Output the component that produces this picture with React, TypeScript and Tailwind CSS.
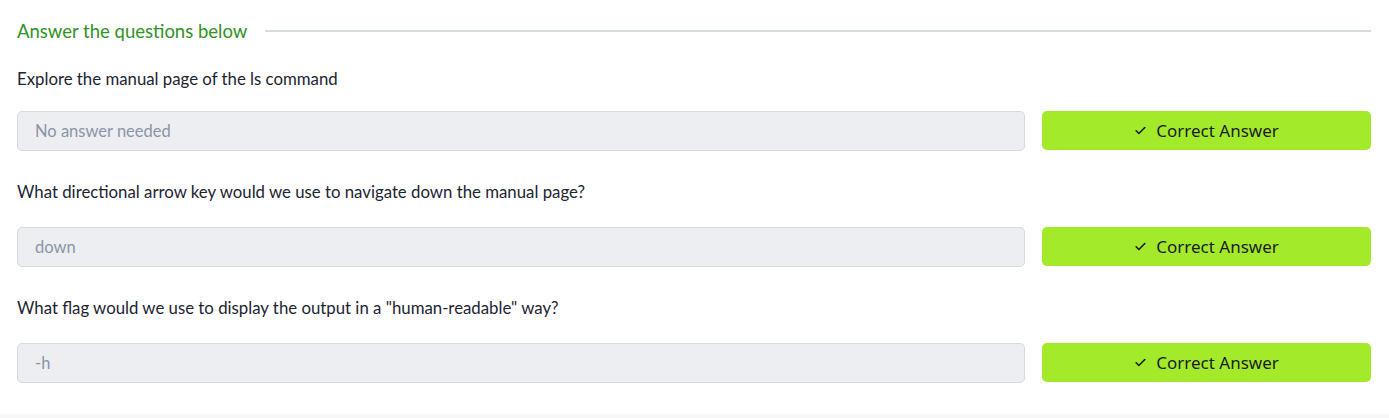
const questions = [
  { text: "Explore the manual page of the ls command", answer: "No answer needed" },
  { text: "What directional arrow key would we use to navigate down the manual page?", answer: "down" },
  { text: 'What flag would we use to display the output in a "human-readable" way?', answer: "-h" },
];

function Check() {
  return (
    <svg width="13" height="13" viewBox="0 0 24 24" fill="none" stroke="currentColor" strokeWidth="3" strokeLinecap="round" strokeLinejoin="round">
      <path d="M4 12.5l5 5L20 6.5" />
    </svg>
  );
}

export default function App() {
  return (
    <div className="h-[418px] bg-white flex flex-col font-['Lato',sans-serif]">
      <div className="flex-1 px-[17px] pr-[18px] pt-[19px]">
        <div className="flex items-center gap-[18px]">
          <h3 className="text-[18.5px] leading-[24px] text-[#2f9325]">Answer the questions below</h3>
          <div className="flex-1 h-[2px] bg-[#d8dbe1]" />
        </div>

        {questions.map((q, i) => (
          <div key={q.text} className={i === 0 ? "mt-[24px]" : "mt-[29px]"}>
            <p className="text-[16.8px] leading-[24px] text-[#1c2431]">{q.text}</p>
            <div className={`${i === 0 ? "mt-[20px]" : "mt-[23px]"} flex gap-[17px]`}>
              <div className="flex-1 h-[40px] rounded-[5px] border border-[#d5d9e0] bg-[#eceef2] px-[17px] flex items-center text-[16.5px] text-[#8b95a5]">
                {q.answer}
              </div>
              <button
                type="button"
                className="w-[329px] h-[39px] rounded-[5px] bg-[#a3ea2a] flex items-center justify-center gap-[9px] text-[17px] text-[#1d1c26] font-['Noto_Sans',sans-serif]"
              >
                <Check />
                Correct Answer
              </button>
            </div>
          </div>
        ))}
      </div>
      <div className="h-[4px] bg-[#f7f7f7]" />
    </div>
  );
}
